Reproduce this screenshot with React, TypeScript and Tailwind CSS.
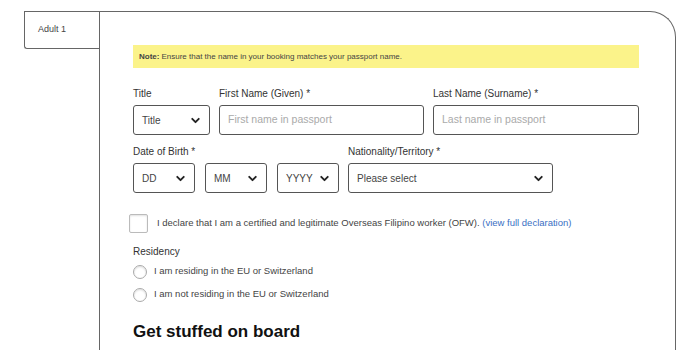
import { ChevronDown } from 'lucide-react';

const font = { fontFamily: '"Liberation Sans", Arial, sans-serif' };

function Select({ label, width }: { label: string; width: string }) {
  return (
    <div className={`${width} h-[30px] border border-[#555] rounded-[3px] flex items-center justify-between pl-[8px] pr-[7px] bg-white`}>
      <span className="text-[10px] text-[#444]">{label}</span>
      <ChevronDown className="w-[13px] h-[13px] text-[#222]" strokeWidth={3.5} />
    </div>
  );
}

function Radio({ label }: { label: string }) {
  return (
    <div className="flex items-center gap-[7px] h-[15px]">
      <div className="w-[14px] h-[14px] rounded-full border border-[#aaa] bg-white shadow-[inset_0_1px_2px_rgba(0,0,0,0.15)]" />
      <span className="text-[9.5px] text-[#444]">{label}</span>
    </div>
  );
}

export default function App() {
  return (
    <div className="w-[700px] h-[350px] bg-white overflow-hidden flex pt-[11px] pl-[24px]" style={font}>
      <div className="w-[75px] h-[38px] shrink-0 border border-r-0 border-[#666] rounded-bl-[3px] flex items-center pl-[13px] text-[9px] text-[#444]">
        Adult 1
      </div>
      <div className="w-[577px] h-[400px] border-l border-t border-r border-[#666] rounded-tr-[26px] pl-[33px] pt-[33px] text-[#333]">
        <div className="w-[506px] h-[23px] bg-[#fbf38a] flex items-center pl-[6px] text-[8px] text-[#444]">
          <span className="font-bold mr-[2px]">Note:</span> Ensure that the name in your booking matches your passport name.
        </div>

        <div className="flex gap-[9px] mt-[18px]">
          <div className="flex flex-col">
            <span className="text-[10px] h-[12px] mb-[7px]">Title</span>
            <Select label="Title" width="w-[77px]" />
          </div>
          <div className="flex flex-col">
            <span className="text-[10px] h-[12px] mb-[7px]">First Name (Given) *</span>
            <div className="w-[205px] h-[30px] border border-[#555] rounded-[3px] flex items-center pl-[8px] text-[10.5px] text-[#aaa]">First name in passport</div>
          </div>
          <div className="flex flex-col">
            <span className="text-[10px] h-[12px] mb-[7px]">Last Name (Surname) *</span>
            <div className="w-[206px] h-[30px] border border-[#555] rounded-[3px] flex items-center pl-[8px] text-[10.5px] text-[#aaa]">Last name in passport</div>
          </div>
        </div>

        <div className="flex gap-[9px] mt-[9px]">
          <div className="flex flex-col">
            <span className="text-[10px] h-[12px] mb-[7px]">Date of Birth *</span>
            <div className="flex gap-[10px]">
              <Select label="DD" width="w-[62px]" />
              <Select label="MM" width="w-[62px]" />
              <Select label="YYYY" width="w-[62px]" />
            </div>
          </div>
          <div className="flex flex-col">
            <span className="text-[10px] h-[12px] mb-[7px]">Nationality/Territory *</span>
            <Select label="Please select" width="w-[205px]" />
          </div>
        </div>

        <div className="flex items-center gap-[9px] mt-[21px] -ml-[4px]">
          <div className="w-[19px] h-[19px] border border-[#bbb] rounded-[2px] bg-white shadow-[inset_0_1px_2px_rgba(0,0,0,0.12)]" />
          <span className="text-[9.5px] text-[#444]">
            I declare that I am a certified and legitimate Overseas Filipino worker (OFW).{' '}
            <span className="text-[#3a6fc4]">(view full declaration)</span>
          </span>
        </div>

        <div className="text-[10px] mt-[11px] text-[#333]">Residency</div>
        <div className="flex flex-col gap-[8px] mt-[5px]">
          <Radio label="I am residing in the EU or Switzerland" />
          <Radio label="I am not residing in the EU or Switzerland" />
        </div>

        <div className="text-[17px] font-bold text-[#111] mt-[17px]">Get stuffed on board</div>
      </div>
    </div>
  );
}
